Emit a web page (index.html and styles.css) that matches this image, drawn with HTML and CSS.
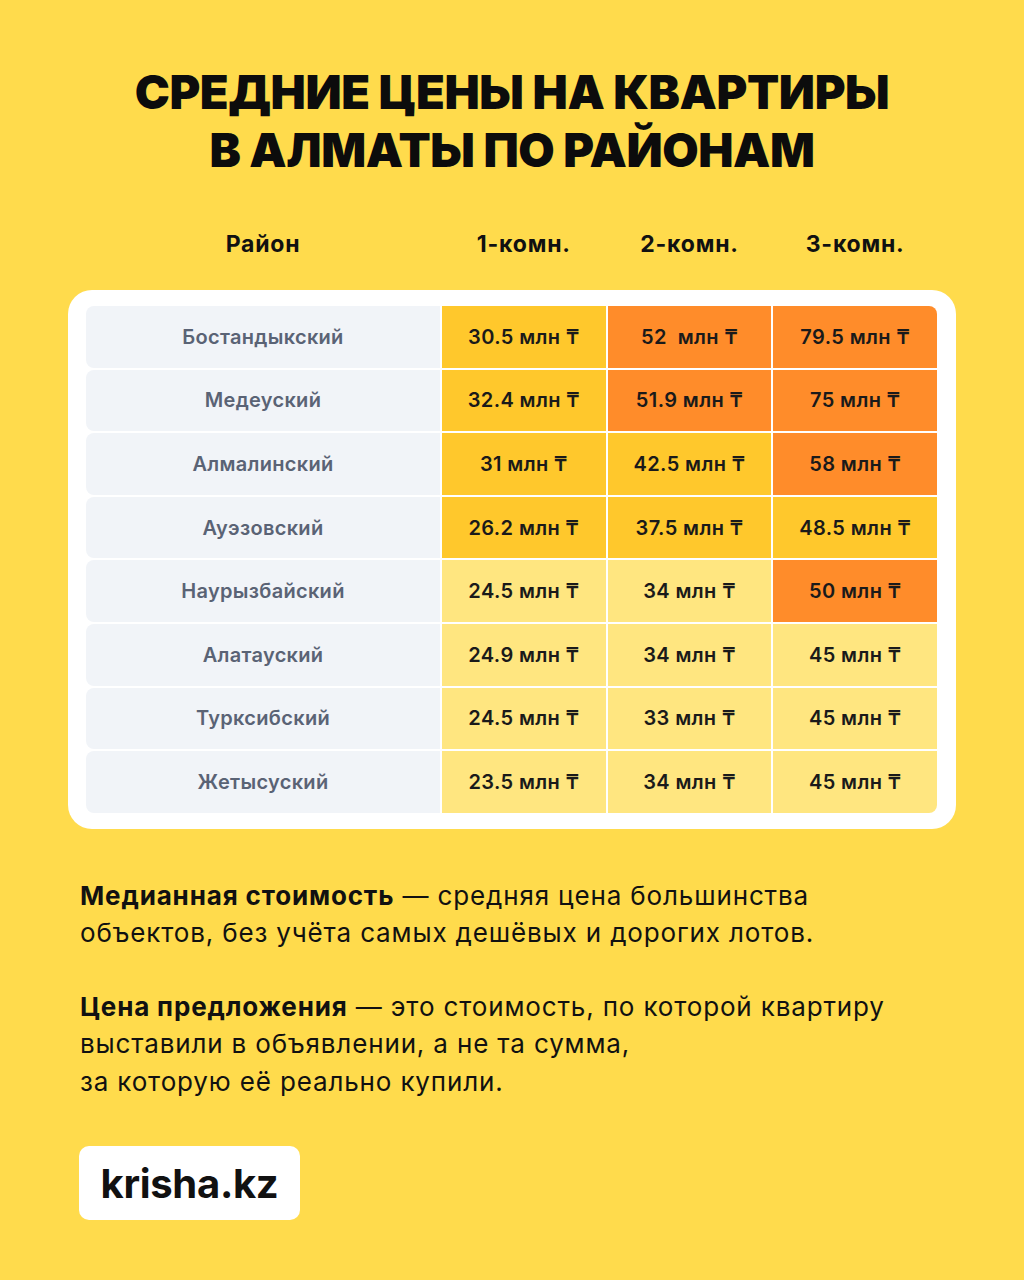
FILE: index.html
```html
<!DOCTYPE html>
<html lang="ru">
<head>
<meta charset="utf-8">
<title>Средние цены на квартиры в Алматы по районам</title>
<link rel="stylesheet" href="styles.css">
</head>
<body>
<main class="page">
  <h1 class="title">СРЕДНИЕ ЦЕНЫ НА КВАРТИРЫ<br>В АЛМАТЫ ПО РАЙОНАМ</h1>

  <div class="head-row">
    <div>Район</div>
    <div>1-комн.</div>
    <div>2-комн.</div>
    <div>3-комн.</div>
  </div>

  <section class="card">
    <div class="table">
      <div class="name">Бостандыкский</div>
      <div class="cell mid">30.5 млн ₸</div>
      <div class="cell hot">52&nbsp; млн ₸</div>
      <div class="cell hot tr">79.5 млн ₸</div>

      <div class="name">Медеуский</div>
      <div class="cell mid">32.4 млн ₸</div>
      <div class="cell hot">51.9 млн ₸</div>
      <div class="cell hot">75 млн ₸</div>

      <div class="name">Алмалинский</div>
      <div class="cell mid">31 млн ₸</div>
      <div class="cell mid">42.5 млн ₸</div>
      <div class="cell hot">58 млн ₸</div>

      <div class="name">Ауэзовский</div>
      <div class="cell mid">26.2 млн ₸</div>
      <div class="cell mid">37.5 млн ₸</div>
      <div class="cell mid">48.5 млн ₸</div>

      <div class="name">Наурызбайский</div>
      <div class="cell low">24.5 млн ₸</div>
      <div class="cell low">34 млн ₸</div>
      <div class="cell hot">50 млн ₸</div>

      <div class="name">Алатауский</div>
      <div class="cell low">24.9 млн ₸</div>
      <div class="cell low">34 млн ₸</div>
      <div class="cell low">45 млн ₸</div>

      <div class="name">Турксибский</div>
      <div class="cell low">24.5 млн ₸</div>
      <div class="cell low">33 млн ₸</div>
      <div class="cell low">45 млн ₸</div>

      <div class="name">Жетысуский</div>
      <div class="cell low">23.5 млн ₸</div>
      <div class="cell low">34 млн ₸</div>
      <div class="cell low br">45 млн ₸</div>
    </div>
  </section>

  <section class="notes">
    <p><b>Медианная стоимость</b> — средняя цена большинства<br>объектов, без учёта самых дешёвых и дорогих лотов.</p>
    <p><b>Цена предложения</b> — это стоимость, по которой квартиру<br>выставили в объявлении, а не та сумма,<br>за которую её реально купили.</p>
  </section>

  <div class="logo">krisha.kz</div>
</main>
</body>
</html>
```

FILE: styles.css
```css
* { box-sizing: border-box; }
html, body { margin: 0; padding: 0; }
body {
  background: #FFDB4C;
  font-family: Inter, "Noto Sans", "DejaVu Sans", sans-serif;
  color: #111;
}
.page {
  width: 1024px;
  height: 1280px;
  padding: 63px 68px 0 68px;
}
.title {
  margin: 0;
  text-align: center;
  font-size: 47px;
  line-height: 58px;
  font-weight: 900;
  letter-spacing: -0.4px;
  color: #0c0c0c;
}
.head-row {
  margin-top: 45px;
  padding: 0 19px 0 18px;
  display: grid;
  grid-template-columns: 354px 1fr 1fr 1fr;
  column-gap: 2px;
  height: 40px;
  align-items: center;
  text-align: center;
  font-size: 23px;
  font-weight: 700;
  letter-spacing: 0.8px;
  color: #111;
}
.card {
  margin-top: 26px;
  background: #fff;
  border-radius: 24px;
  padding: 16px 19px 16px 18px;
}
.table {
  display: grid;
  grid-template-columns: 354px 1fr 1fr 1fr;
  grid-auto-rows: 61.6px;
  gap: 2px;
}
.name, .cell {
  display: flex;
  align-items: center;
  justify-content: center;
  font-size: 20px;
  font-weight: 600;
}
.name {
  background: #F1F4F8;
  color: #5A6375;
  border-radius: 8px 0 0 8px;
  letter-spacing: 0.3px;
}
.cell {
  color: #1a1a1a;
  letter-spacing: 0.4px;
}
.mid { background: #FFC82C; }
.hot { background: #FF8C2A; }
.low { background: #FFE680; }
.tr { border-top-right-radius: 8px; }
.br { border-bottom-right-radius: 8px; }
.notes {
  margin-top: 48px;
  padding-left: 12px;
  font-size: 26px;
  line-height: 37.5px;
  letter-spacing: 0.85px;
  color: #111;
}
.notes p { margin: 0 0 36px 0; }
.notes b { font-weight: 700; }
.logo {
  margin-top: 46px;
  margin-left: 11px;
  width: 221px;
  height: 74px;
  background: #fff;
  border-radius: 10px;
  display: flex;
  align-items: center;
  justify-content: center;
  font-size: 40px;
  font-weight: 700;
  letter-spacing: -0.3px;
  color: #111;
}
```
